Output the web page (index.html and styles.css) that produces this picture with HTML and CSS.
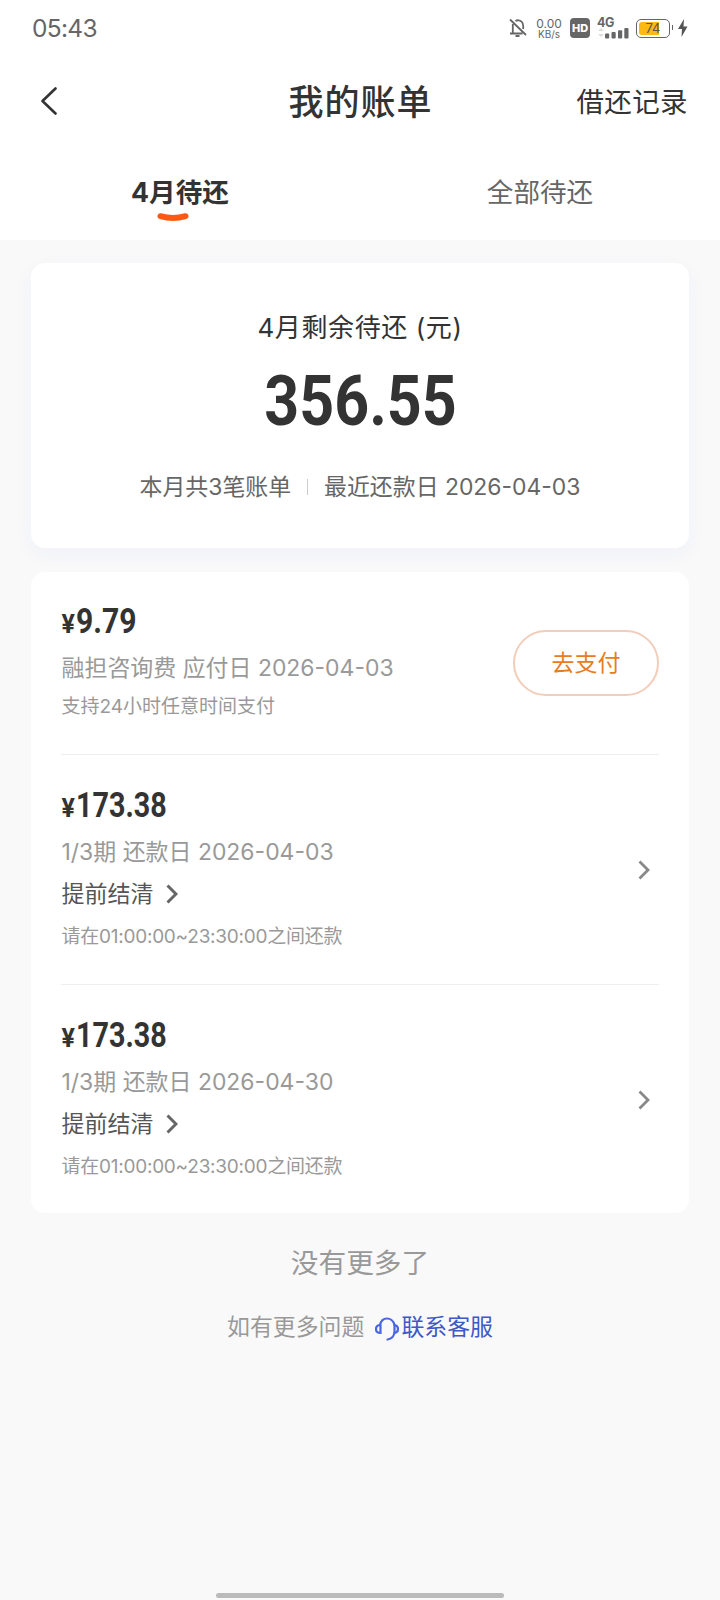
FILE: index.html
```html
<!DOCTYPE html>
<html lang="zh-CN">
<head>
<meta charset="utf-8">
<title>我的账单</title>
<link rel="stylesheet" href="styles.css">
</head>
<body>
<div class="page">
  <div class="status">
    <span class="clock">05:43</span>
    <div class="status-icons">
      <svg class="bell" width="18" height="20" viewBox="0 0 18 20" fill="none" stroke="#666" stroke-width="1.8"><path d="M1 1.500 17 17M3.800 6V14.500M1 15.500H13.500M6.500 3.200C8 1.800 11 2 12.500 3.600 14 5 14.200 6.500 14.200 8V11"/><path d="M6.500 18h4" stroke-width="2"/></svg>
      <span class="speed"><span>0.00</span><span class="unit">KB/s</span></span>
      <span class="hd">HD</span>
      <span class="signal"><span class="net">4G</span>
        <svg width="32" height="12" viewBox="0 0 32 12" fill="#666"><path d="M1 4 4 1 7 4ZM1 7 4 10 7 7Z" fill="#ddd"/><rect x="8" y="6.500" width="4.200" height="5" rx="1"/><rect x="14.500" y="5" width="4.200" height="6.500" rx="1"/><rect x="21" y="3.200" width="4.200" height="8.300" rx="1"/><rect x="27.300" y="1" width="4.200" height="10.500" rx="1"/></svg>
      </span>
      <span class="battery"><span class="level">74</span></span>
      <svg class="bolt" width="10" height="18" viewBox="0 0 10 18" fill="#555"><path d="M6 0 0 10H4L3.500 18 9.500 7.500H5.500Z"/></svg>
    </div>
  </div>
  <header class="nav">
    <svg class="back" width="18" height="30" viewBox="0 0 18 30" fill="none" stroke="#333" stroke-width="2.600" stroke-linecap="round" stroke-linejoin="round"><path d="M15.500 1.500 2.500 14 15.500 26.500"/></svg>
    <h1 class="title">我的账单</h1>
    <span class="records">借还记录</span>
  </header>
  <nav class="tabs">
    <div class="tab active">4月待还<svg class="smile" width="32" height="10" viewBox="0 0 32 10" fill="none" stroke="#fb5a14" stroke-width="6" stroke-linecap="round"><path d="M3.500 3.200Q16 6.800 28.500 3.200"/></svg></div>
    <div class="tab">全部待还</div>
  </nav>
  <main class="content">
    <section class="card summary">
      <div class="summary-title">4月剩余待还 (元)</div>
      <div class="total"><span>356.55</span></div>
      <div class="meta"><span>本月共3笔账单</span><i class="bar"></i><span>最近还款日 2026-04-03</span></div>
    </section>
    <section class="card list">
      <article class="bill first">
        <div class="info">
          <div class="amount"><span class="yen">¥</span><span class="num">9.79</span></div>
          <div class="desc">融担咨询费 应付日 2026-04-03</div>
          <div class="note">支持24小时任意时间支付</div>
        </div>
        <button class="pay">去支付</button>
      </article>
      <article class="bill">
        <div class="info">
          <div class="amount"><span class="yen">¥</span><span class="num long">173.38</span></div>
          <div class="desc">1/3期 还款日 2026-04-03</div>
          <div class="early">提前结清<svg width="12" height="20" viewBox="0 0 12 20" fill="none" stroke="#666" stroke-width="3"><path d="M1.500 1.500 10 10 1.500 18.500"/></svg></div>
          <div class="note hours">请在01:00:00~23:30:00之间还款</div>
        </div>
        <svg class="go" width="12" height="20" viewBox="0 0 12 20" fill="none" stroke="#888" stroke-width="2.800"><path d="M1.500 1.500 10 10 1.500 18.500"/></svg>
      </article>
      <article class="bill">
        <div class="info">
          <div class="amount"><span class="yen">¥</span><span class="num long">173.38</span></div>
          <div class="desc">1/3期 还款日 2026-04-30</div>
          <div class="early">提前结清<svg width="12" height="20" viewBox="0 0 12 20" fill="none" stroke="#666" stroke-width="3"><path d="M1.500 1.500 10 10 1.500 18.500"/></svg></div>
          <div class="note hours">请在01:00:00~23:30:00之间还款</div>
        </div>
        <svg class="go" width="12" height="20" viewBox="0 0 12 20" fill="none" stroke="#888" stroke-width="2.800"><path d="M1.500 1.500 10 10 1.500 18.500"/></svg>
      </article>
    </section>
    <div class="no-more">没有更多了</div>
    <div class="help"><span>如有更多问题</span><svg width="24" height="24" viewBox="0 0 24 24" fill="none" stroke="#4a66e0" stroke-width="2.200" stroke-linecap="round"><path d="M5 8C6 3.500 9 1.500 12 1.500S18.500 3.500 19.500 8V15C19 19.500 16.500 22 12.500 22.500"/><path d="M5.500 8V16C2.500 16 1 14.500 1 12S2.500 8 5.500 8M19.500 8C22 8.500 23 10 23 12S22 15.500 19.500 16"/></svg><a class="service">联系客服</a></div>
  </main>
  <div class="home"></div>
</div>
</body>
</html>
```
FILE: styles.css
```css
* { box-sizing: border-box; }
body { margin: 0; background: #f9f9f9; font-family: Inter, "Noto Sans CJK SC", sans-serif; color: #333; }
.page { width: 720px; height: 1600px; display: flex; flex-direction: column; overflow: hidden; }

.status { height: 56px; flex: none; background: #fff; display: flex; align-items: center; justify-content: space-between; padding: 0 32px 0 32px; color: #666; }
.clock { font-size: 24.500px; line-height: 56px; letter-spacing: -0.700px; }
.status-icons { display: flex; align-items: center; }
.speed { display: flex; flex-direction: column; align-items: center; width: 28px; margin-left: 8px; font-size: 12px; line-height: 11px; }
.unit { font-size: 10px; line-height: 10px; }
.hd { width: 20px; height: 20px; margin-left: 7px; border-radius: 4px; background: #666; color: #fff; font-size: 11px; font-weight: 800; line-height: 20px; text-align: center; }
.signal { width: 32px; height: 22px; margin-left: 7px; position: relative; }
.net { position: absolute; left: 0; top: 1px; font-size: 12.500px; font-weight: 700; line-height: 10px; letter-spacing: -0.500px; }
.signal svg { position: absolute; left: 0; bottom: 0; }
.battery { width: 34px; height: 19px; margin-left: 7px; border: 1.500px solid #666; border-radius: 5px; padding: 2px; position: relative; }
.battery::after { content: ""; position: absolute; right: -4px; top: 5px; width: 1.500px; height: 5px; background: #666; }
.level { display: block; height: 13px; border-radius: 3px; background: linear-gradient(90deg, #fdb913 72%, #fff 72%); font-size: 13px; line-height: 13px; text-align: center; color: #555; }
.bolt { margin-left: 8px; }

.nav { height: 92px; flex: none; background: #fff; display: grid; grid-template-columns: 1fr auto 1fr; align-items: center; padding: 0 32px 0 40px; }
.title { margin: 0; font-size: 35px; font-weight: 500; line-height: 50px; letter-spacing: 1px; padding-right: 7px; }
.records { justify-self: end; font-size: 27.500px; line-height: 40px; letter-spacing: 0.400px; margin-top: -1px; }

.tabs { height: 92px; flex: none; background: #fff; display: grid; grid-template-columns: 1fr 1fr; text-align: center; }
.tab { position: relative; padding-top: 24px; font-size: 26.600px; line-height: 40px; color: #666; }
.active { color: #333; font-weight: 700; }
.smile { position: absolute; left: 157px; top: 65px; }

.content { flex: 1; padding: 23px 31px 0; }
.card { background: #fff; border-radius: 14px; }
.summary { height: 285px; padding-top: 45px; text-align: center; box-shadow: 0 6px 20px rgba(40, 80, 255, 0.045); }
.summary-title { font-size: 26px; line-height: 40px; letter-spacing: 0.600px; }
.total { margin-top: 13px; height: 80px; font-family: Roboto, sans-serif; font-size: 70px; font-weight: 700; line-height: 80px; }
.total span { display: inline-block; transform: translateX(1px) scaleX(0.870); }
.meta { margin-top: 28px; display: flex; justify-content: center; align-items: center; font-size: 22.900px; line-height: 36px; color: #666; }
.bar { width: 1px; height: 16px; margin: 0 16px; background: #ccc; }

.list { margin-top: 24px; height: 641px; padding: 0 30px; }
.bill { height: 230px; display: flex; justify-content: space-between; align-items: center; border-top: 1px solid #eee; }
.first { height: 182px; border-top: 0; }
.info { align-self: flex-start; padding: 30px 0 0 0.500px; }
.first .info { padding-top: 29px; }
.amount { height: 42px; display: flex; align-items: baseline; font-family: Roboto, sans-serif; font-weight: 700; line-height: 42px; }
.yen { font-size: 25px; width: 14px; }
.num { font-size: 35px; transform: scaleX(0.860); transform-origin: left; }
.long { transform: scaleX(0.820); }
.desc { margin-top: 7px; height: 36px; font-size: 22.950px; line-height: 36px; color: #999; white-space: nowrap; }
.early { height: 36px; margin-top: 6px; display: flex; align-items: center; gap: 12px; font-size: 23px; line-height: 36px; color: #555; }
.note { height: 30px; margin-top: 10px; font-size: 19px; line-height: 30px; color: #999; white-space: nowrap; }
.hours { letter-spacing: -0.250px; }
.first .note { margin-top: 6px; }
.pay { width: 146px; height: 66px; border: 2px solid #f2cdb9; border-radius: 33px; background: #fff; color: #e87c22; font: 23px/40px Inter, "Noto Sans CJK SC", sans-serif; padding: 0; }
.go { margin-right: 9px; }

.no-more { margin-top: 30px; font-size: 27.700px; line-height: 40px; text-align: center; color: #999; }
.help { margin-top: 26px; display: flex; align-items: center; justify-content: center; font-size: 22.900px; line-height: 36px; color: #999; }
.help svg { margin: 3px 2px 0 11px; }
.service { color: #3d58c8; }
.home { width: 288px; height: 5px; margin: 0 auto 2px; border-radius: 3px; background: #bbb; flex: none; }
```
